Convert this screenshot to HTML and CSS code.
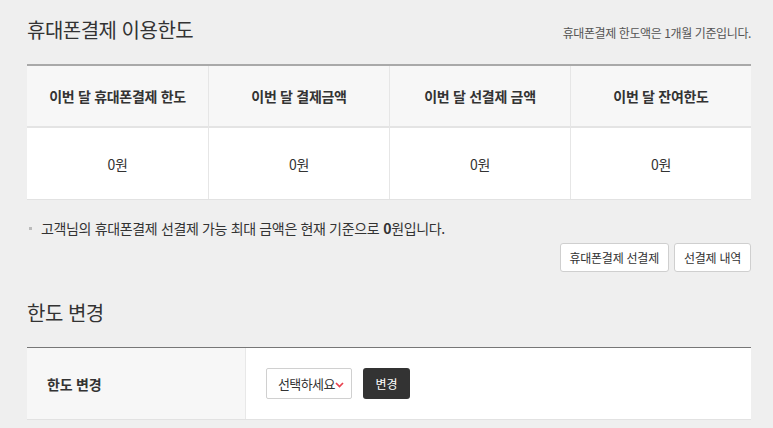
FILE: index.html
```html
<!DOCTYPE html>
<html lang="ko">
<head>
<meta charset="utf-8">
<link rel="stylesheet" href="styles.css">
</head>
<body>
<div class="page">
  <div class="section-head">
    <h2 class="title">휴대폰결제 이용한도</h2>
    <span class="note">휴대폰결제 한도액은 1개월 기준입니다.</span>
  </div>
  <div class="limit-table">
    <div class="th">이번 달 휴대폰결제 한도</div>
    <div class="th">이번 달 결제금액</div>
    <div class="th">이번 달 선결제 금액</div>
    <div class="th">이번 달 잔여한도</div>
    <div class="td">0원</div>
    <div class="td">0원</div>
    <div class="td">0원</div>
    <div class="td">0원</div>
  </div>
  <p class="info"><span class="dot"></span>고객님의 휴대폰결제 선결제 가능 최대 금액은 현재 기준으로 <b>0</b>원입니다.</p>
  <div class="btn-row">
    <button class="btn">휴대폰결제 선결제</button>
    <button class="btn">선결제 내역</button>
  </div>
  <h2 class="title title-2">한도 변경</h2>
  <div class="change-table">
    <div class="label">한도 변경</div>
    <div class="field">
      <div class="select"><span>선택하세요</span><svg width="9" height="6" viewBox="0 0 9 6"><path d="M1 1 L4.5 4.6 L8 1" fill="none" stroke="#e8424f" stroke-width="1.7"/></svg></div>
      <button class="btn-dark">변경</button>
    </div>
  </div>
</div>
</body>
</html>
```

FILE: styles.css
```css
* { box-sizing: border-box; }
html, body { margin: 0; padding: 0; }
body {
  background: #efefef;
  font-family: "Noto Sans CJK KR", "Noto Sans", sans-serif;
  color: #333;
}
.page { padding: 0 22px 0 27px; }
.section-head {
  display: flex;
  justify-content: space-between;
  align-items: baseline;
  padding-top: 17px;
  margin-bottom: 21px;
}
.title {
  margin: 0;
  font-size: 20px;
  line-height: 26px;
  font-weight: 400;
  color: #333;
  letter-spacing: -0.5px;
}
.note {
  font-size: 12px;
  color: #555;
  letter-spacing: -0.4px;
}
.limit-table {
  display: grid;
  grid-template-columns: repeat(4, 1fr);
  border-top: 2px solid #a9a9a9;
  border-bottom: 1px solid #e2e2e2;
}
.th, .td {
  display: flex;
  align-items: center;
  justify-content: center;
  font-size: 14px;
  border-left: 1px solid #e6e6e6;
  letter-spacing: -0.3px;
}
.th:nth-child(4n+1), .td:nth-child(4n+1) { border-left: 0; }
.th {
  height: 62px;
  background: #f7f7f7;
  font-weight: 700;
  border-bottom: 2px solid #e4e4e4;
}
.td {
  height: 71px;
  background: #fff;
}
.info {
  margin: 18px 0 0;
  font-size: 14px;
  line-height: 20px;
  color: #333;
  display: flex;
  align-items: center;
  letter-spacing: -0.35px;
}
.info b { font-weight: 700; margin-left: 4px; }
.dot {
  width: 3px;
  height: 3px;
  background: #bbb;
  margin: 0 9px 0 2px;
}
.btn-row {
  display: flex;
  justify-content: flex-end;
  gap: 5px;
  margin-top: 5px;
}
.btn {
  height: 29px;
  padding: 0 9px;
  background: #fff;
  border: 1px solid #cfcfcf;
  border-radius: 3px;
  font-family: inherit;
  font-size: 12px;
  color: #333;
  letter-spacing: -0.25px;
}
.title-2 { margin-top: 28px; margin-bottom: 21px; }
.change-table {
  display: flex;
  border-top: 1px solid #777;
  border-bottom: 1px solid #e2e2e2;
  height: 73px;
}
.label {
  width: 218px;
  background: #f7f7f7;
  display: flex;
  align-items: center;
  padding-left: 20px;
  font-size: 14px;
  font-weight: 700;
  letter-spacing: -0.2px;
}
.field {
  flex: 1;
  background: #fff;
  border-left: 1px solid #e8e8e8;
  display: flex;
  align-items: center;
  padding-left: 20px;
  gap: 11px;
}
.select {
  width: 86px;
  height: 31px;
  border: 1px solid #d0d0d0;
  border-radius: 2px;
  background: #fff;
  display: flex;
  align-items: center;
  padding-left: 11px;
  font-size: 13px;
  letter-spacing: -0.6px;
}
.select svg { margin-left: 0; margin-top: 2px; }
.btn-dark {
  height: 31px;
  width: 47px;
  background: #333;
  color: #fff;
  border: 0;
  border-radius: 3px;
  font-family: inherit;
  font-size: 12px;
}
```
